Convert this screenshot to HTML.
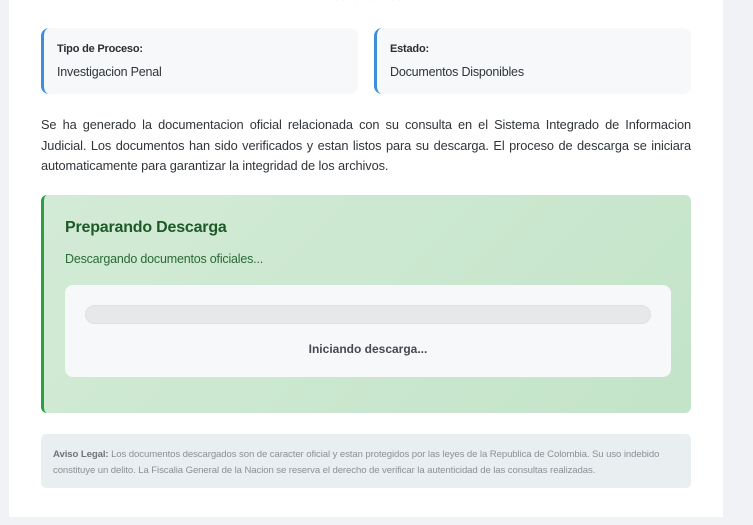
<!DOCTYPE html>
<html><head><meta charset="utf-8"><style>
*{margin:0;padding:0;box-sizing:border-box}
body{width:753px;height:525px;background:#f1f2f5;font-family:"Liberation Sans",sans-serif;position:relative;overflow:hidden}
.card{position:absolute;left:9px;top:0;width:714px;height:517px;background:#fff}
.top{position:absolute;left:0;width:100%;top:-9px;text-align:center;color:#bcd6ee;font-size:13px;letter-spacing:2px;filter:blur(0.4px)}
.info{position:absolute;top:28px;height:66px;width:317px;background:#f6f8fa;border-left:3px solid #3d8fdc;border-radius:8px;padding-left:13px}
.info .l{position:absolute;top:15px;font-size:11px;font-weight:bold;color:#2b2f33;letter-spacing:-0.2px}
.info .v{position:absolute;top:37px;font-size:12.5px;color:#2f3439;letter-spacing:-0.2px}
.para{position:absolute;left:41px;top:115px;width:650px;font-size:12.8px;line-height:20.5px;color:#30353a;text-align:justify;letter-spacing:-0.1px}
.green{position:absolute;left:41px;top:195px;width:650px;height:218px;background:linear-gradient(135deg,#d3ebd6,#c3e4c9);border-left:3px solid #2e9e45;border-radius:6px}
.green h2{position:absolute;left:21px;top:24px;font-size:16px;color:#1d5a28;letter-spacing:-0.2px}
.green .s{position:absolute;left:21px;top:57px;font-size:12.5px;color:#2a6a36;letter-spacing:-0.2px}
.inner{position:absolute;left:21px;top:90px;width:606px;height:92px;background:#f7f8fa;border-radius:8px}
.bar{position:absolute;left:20px;top:20px;width:566px;height:19px;background:#e6e8ea;border-radius:10px;border:1px solid #dfe2e5}
.inner .t{position:absolute;left:0;width:100%;top:57px;text-align:center;font-size:12px;font-weight:bold;color:#454a50}
.legal{position:absolute;left:41px;top:434px;width:650px;height:54px;background:#e9eef0;border-radius:5px;padding:13px 12px 0 12px;font-size:9.6px;line-height:15.5px;color:#8a9196;letter-spacing:-0.1px}
.legal b{color:#6d757b}
</style></head><body>
<div class="card">
<div class="top">·····  ······</div>
<div class="info" style="left:32px"><div class="l">Tipo de Proceso:</div><div class="v">Investigacion Penal</div></div>
<div class="info" style="left:365px"><div class="l">Estado:</div><div class="v">Documentos Disponibles</div></div>
</div>
<div class="para">Se ha generado la documentacion oficial relacionada con su consulta en el Sistema Integrado de Informacion Judicial. Los documentos han sido verificados y estan listos para su descarga. El proceso de descarga se iniciara automaticamente para garantizar la integridad de los archivos.</div>
<div class="green">
<h2>Preparando Descarga</h2>
<div class="s">Descargando documentos oficiales...</div>
<div class="inner"><div class="bar"></div><div class="t">Iniciando descarga...</div></div>
</div>
<div class="legal"><b>Aviso Legal:</b> Los documentos descargados son de caracter oficial y estan protegidos por las leyes de la Republica de Colombia. Su uso indebido constituye un delito. La Fiscalia General de la Nacion se reserva el derecho de verificar la autenticidad de las consultas realizadas.</div>
</body></html>
